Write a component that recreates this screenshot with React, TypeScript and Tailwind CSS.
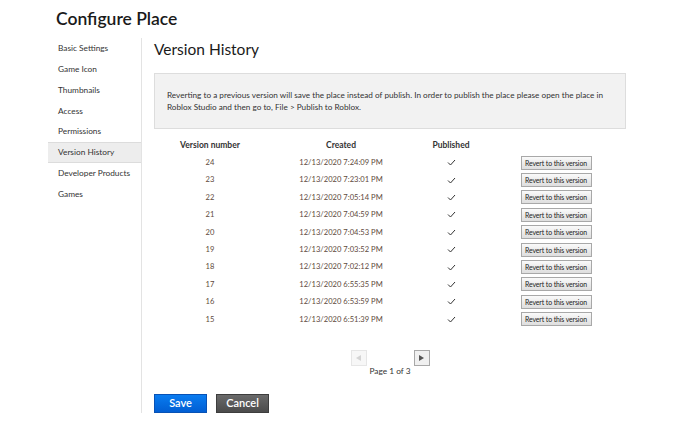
import { useState } from "react";

const navItems = [
    "Basic Settings",
    "Game Icon",
    "Thumbnails",
    "Access",
    "Permissions",
    "Version History",
    "Developer Products",
    "Games",
];

const versions = [
    { n: 24, date: "12/13/2020 7:24:09 PM" },
    { n: 23, date: "12/13/2020 7:23:01 PM" },
    { n: 22, date: "12/13/2020 7:05:14 PM" },
    { n: 21, date: "12/13/2020 7:04:59 PM" },
    { n: 20, date: "12/13/2020 7:04:53 PM" },
    { n: 19, date: "12/13/2020 7:03:52 PM" },
    { n: 18, date: "12/13/2020 7:02:12 PM" },
    { n: 17, date: "12/13/2020 6:55:35 PM" },
    { n: 16, date: "12/13/2020 6:53:59 PM" },
    { n: 15, date: "12/13/2020 6:51:39 PM" },
];

function Check() {
    return (
        <svg width="9" height="7" viewBox="0 0 9 7" fill="none">
            <path d="M1 3.5 L3.5 6 L8 1" stroke="#333" strokeWidth="1" />
        </svg>
    );
}

export default function App() {
    const [active, setActive] = useState("Version History");

    return (
        <div className="min-h-[438px] w-[690px] bg-white pl-[48px] pt-[6px] text-[#333]" style={{ fontFamily: "Lato, 'Open Sans', sans-serif" }}>
            <h1 className="ml-[8px] text-[17.5px] font-semibold leading-[26px] text-[#1a1a1a]">Configure Place</h1>
            <div className="mt-[6px] flex">
                <div className="w-[94px] border-r border-[#e3e3e3] pb-[2px]">
                    <ul>
                        {navItems.map((item) => (
                            <li
                                key={item}
                                onClick={() => setActive(item)}
                                className={`flex h-[20.8px] cursor-pointer items-center pl-[10px] text-[8.3px] text-[#333] ${active === item ? "border-y border-[#dcdcdc] bg-[#ededed]" : ""}`}>
                                {item}
                            </li>
                        ))}
                    </ul>
                </div>
                <div className="ml-[12px] w-[472px]">
                    <h2 className="mt-[-1px] text-[15.5px] leading-[24px] text-[#1a1a1a]">Version History</h2>
                    <div className="mt-[12px] flex h-[56px] items-center border border-[#dddddd] bg-[#f2f2f2] px-[12px] text-[8.2px] leading-[12px] text-[#333]">
                        <p>
                            Reverting to a previous version will save the place instead of publish. In order to publish the place please open the place in Roblox Studio and then go to, File &gt; Publish to Roblox.
                        </p>
                    </div>
                    <div className="mt-[8px]">
                        <div className="grid h-[17px] grid-cols-[112px_150px_70px_140px] items-center text-[8.5px] font-bold text-[#333]">
                            <div className="text-center">Version number</div>
                            <div className="text-center">Created</div>
                            <div className="text-center">Published</div>
                            <div />
                        </div>
                        {versions.map((v) => (
                            <div key={v.n} className="grid h-[17.4px] grid-cols-[112px_150px_70px_140px] items-center text-[7.6px] text-[#5e4a3c]">
                                <div className="text-center">{v.n}</div>
                                <div className="text-center">{v.date}</div>
                                <div className="flex justify-center"><Check /></div>
                                <div className="flex justify-center">
                                    <button className="h-[14px] w-[71px] whitespace-nowrap border border-[#a8a8a8] bg-gradient-to-b from-[#fafafa] to-[#dedede] text-[6.9px] leading-[12px] tracking-[-0.1px] text-[#222]">
                                        Revert to this version
                                    </button>
                                </div>
                            </div>
                        ))}
                    </div>
                    <div className="mt-[22px] flex flex-col items-center">
                        <div className="flex w-[79px] justify-between">
                            <button className="flex h-[16px] w-[16px] items-center justify-center border border-[#e6e6e6] bg-[#f7f7f7]">
                                <svg width="5" height="6" viewBox="0 0 5 6"><path d="M5 0 L0 3 L5 6 Z" fill="#d4d4d4" /></svg>
                            </button>
                            <button className="flex h-[16px] w-[16px] items-center justify-center border border-[#a8a8a8] bg-[#f0f0f0]">
                                <svg width="5" height="6" viewBox="0 0 5 6"><path d="M0 0 L5 3 L0 6 Z" fill="#555" /></svg>
                            </button>
                        </div>
                        <div className="text-[8.3px] leading-[11px] text-[#333]">Page 1 of 3</div>
                    </div>
                    <div className="mt-[17px] flex gap-[9px]">
                        <button className="h-[19px] w-[53px] border border-[#0852b5] bg-gradient-to-b from-[#0a7cf0] to-[#025ed3] text-[11px] font-semibold text-white">Save</button>
                        <button className="h-[19px] w-[53px] border border-[#3d3d3d] bg-gradient-to-b from-[#6a6a6a] to-[#4b4b4b] text-[11px] font-semibold text-white">Cancel</button>
                    </div>
                </div>
            </div>
        </div>
    );
}
